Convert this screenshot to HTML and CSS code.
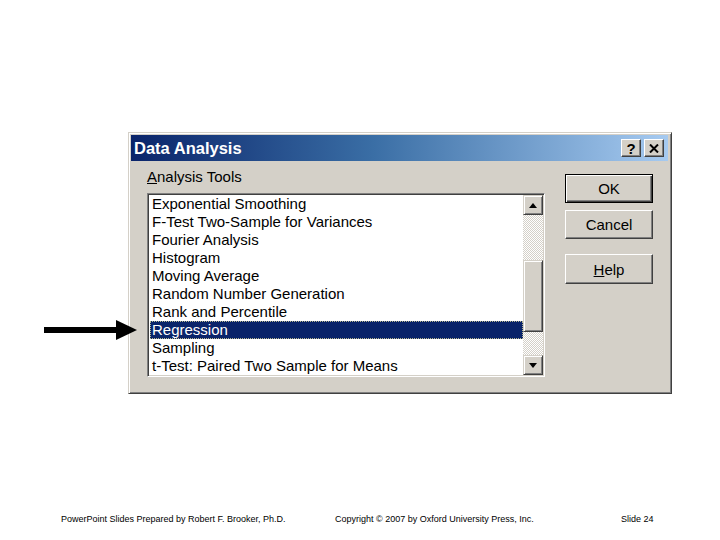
FILE: index.html
```html
<!DOCTYPE html>
<html>
<head>
<meta charset="utf-8">
<link rel="stylesheet" href="styles.css">
</head>
<body>
<div class="slide">
  <div class="dialog">
    <div class="titlebar">
      <span class="title">Data Analysis</span>
      <div class="tbtns">
        <span class="tbtn help-q">?</span>
        <span class="tbtn">
          <svg width="10" height="9" viewBox="0 0 10 9"><path d="M1 0.5 L9 8.5 M9 0.5 L1 8.5" stroke="#000" stroke-width="2"/></svg>
        </span>
      </div>
    </div>
    <div class="content">
      <div class="left">
        <div class="label"><u>A</u>nalysis Tools</div>
        <div class="listbox">
          <ul class="items">
            <li>Exponential Smoothing</li>
            <li>F-Test Two-Sample for Variances</li>
            <li>Fourier Analysis</li>
            <li>Histogram</li>
            <li>Moving Average</li>
            <li>Random Number Generation</li>
            <li>Rank and Percentile</li>
            <li class="sel">Regression</li>
            <li>Sampling</li>
            <li>t-Test: Paired Two Sample for Means</li>
          </ul>
          <div class="scrollbar">
            <div class="sbtn"><svg width="8" height="5" viewBox="0 0 8 5"><polygon points="0,5 8,5 4,0" fill="#000"/></svg></div>
            <div class="track t1"></div>
            <div class="thumb"></div>
            <div class="track t2"></div>
            <div class="sbtn"><svg width="8" height="5" viewBox="0 0 8 5"><polygon points="0,0 8,0 4,5" fill="#000"/></svg></div>
          </div>
        </div>
      </div>
      <div class="right">
        <div class="btn default"><span>OK</span></div>
        <div class="btn">Cancel</div>
        <div class="btn gap"><span><u>H</u>elp</span></div>
      </div>
    </div>
  </div>
  <svg class="arrow" width="94" height="22" viewBox="0 0 94 22">
    <rect x="0" y="8" width="74" height="6" fill="#000"/>
    <polygon points="72,1 93,11 72,21" fill="#000"/>
  </svg>
  <div class="footer">
    <span>PowerPoint Slides Prepared by Robert F. Brooker, Ph.D.</span>
    <span>Copyright © 2007 by Oxford University Press, Inc.</span>
    <span>Slide 24</span>
  </div>
</div>
</body>
</html>
```

FILE: styles.css
```css
html, body {
  margin: 0;
  padding: 0;
  background: #fff;
}
.slide {
  position: relative;
  width: 720px;
  height: 540px;
  overflow: hidden;
  font-family: "Liberation Sans", Arial, sans-serif;
  display: flex;
  flex-direction: column;
}
.dialog {
  box-sizing: border-box;
  margin: 132px 0 0 128px;
  width: 544px;
  height: 262px;
  background: #d4d0c8;
  border: 1px solid;
  border-color: #d4d0c8 #404040 #404040 #d4d0c8;
  box-shadow: inset 1px 1px #fff, inset -1px -1px #808080;
  padding: 2px 3px 2px 2px;
  display: flex;
  flex-direction: column;
}
.titlebar {
  height: 26px;
  background: linear-gradient(to right, #0a246a 0%, #3a6ea5 45%, #a6caf0 100%);
  display: flex;
  align-items: center;
  justify-content: space-between;
  padding: 0 4px 0 3px;
}
.title {
  color: #fff;
  font-weight: bold;
  font-size: 16.5px;
}
.tbtns {
  display: flex;
  gap: 3px;
}
.tbtn {
  box-sizing: border-box;
  width: 20px;
  height: 18px;
  background: #d4d0c8;
  border: 1px solid;
  border-color: #fff #404040 #404040 #fff;
  box-shadow: inset -1px -1px #808080;
  display: flex;
  align-items: center;
  justify-content: center;
}
.help-q {
  font-weight: bold;
  font-size: 15px;
  line-height: 1;
  color: #000;
}
.content {
  display: flex;
  padding: 7px 0 0 16px;
}
.left {
  display: flex;
  flex-direction: column;
}
.label {
  font-size: 15px;
  line-height: 18px;
  height: 18px;
  margin-bottom: 7px;
  color: #000;
}
.listbox {
  box-sizing: border-box;
  width: 398px;
  height: 184px;
  background: #fff;
  border: 1px solid;
  border-color: #808080 #fff #fff #808080;
  box-shadow: inset 1px 1px #404040, inset -1px -1px #d4d0c8;
  padding: 1px;
  display: flex;
}
.items {
  list-style: none;
  margin: 0;
  padding: 0 0 0 1px;
  flex: 1;
  overflow: hidden;
}
.items li {
  font-size: 15px;
  line-height: 18px;
  height: 18px;
  padding-left: 2px;
  white-space: nowrap;
  color: #000;
}
.items li.sel {
  background: #0a246a;
  color: #fff;
  outline: 1px dotted #b8b890;
  outline-offset: -1px;
}
.scrollbar {
  width: 20px;
  display: flex;
  flex-direction: column;
}
.sbtn {
  box-sizing: border-box;
  height: 20px;
  background: #d4d0c8;
  border: 1px solid;
  border-color: #d4d0c8 #404040 #404040 #d4d0c8;
  box-shadow: inset 1px 1px #fff, inset -1px -1px #808080;
  display: flex;
  align-items: center;
  justify-content: center;
}
.track {
  background: repeating-conic-gradient(#fff 0 25%, #d4d0c8 0 50%) 0 0 / 2px 2px;
}
.t1 { height: 45px; }
.t2 { height: 23px; }
.thumb {
  box-sizing: border-box;
  height: 72px;
  background: #d4d0c8;
  border: 1px solid;
  border-color: #d4d0c8 #404040 #404040 #d4d0c8;
  box-shadow: inset 1px 1px #fff, inset -1px -1px #808080;
}
.right {
  display: flex;
  flex-direction: column;
  gap: 7px;
  margin-left: 20px;
  padding-top: 6px;
}
.btn {
  box-sizing: border-box;
  width: 88px;
  height: 29px;
  background: #d4d0c8;
  border: 1px solid;
  border-color: #fff #404040 #404040 #fff;
  box-shadow: inset -1px -1px #808080;
  font-size: 15px;
  color: #000;
  display: flex;
  align-items: center;
  justify-content: center;
}
.btn.default {
  border: 1px solid #000;
  box-shadow: inset 1px 1px #fff, inset -1px -1px #404040, inset -2px -2px #808080;
}
.btn.gap {
  margin-top: 8px;
  height: 30px;
}
.arrow {
  position: absolute;
  left: 44px;
  top: 319px;
}
.footer {
  display: grid;
  grid-template-columns: 274px 286px auto;
  padding-left: 61px;
  margin-top: 119px;
  font-size: 9px;
  line-height: 12px;
  color: #000;
}
```
